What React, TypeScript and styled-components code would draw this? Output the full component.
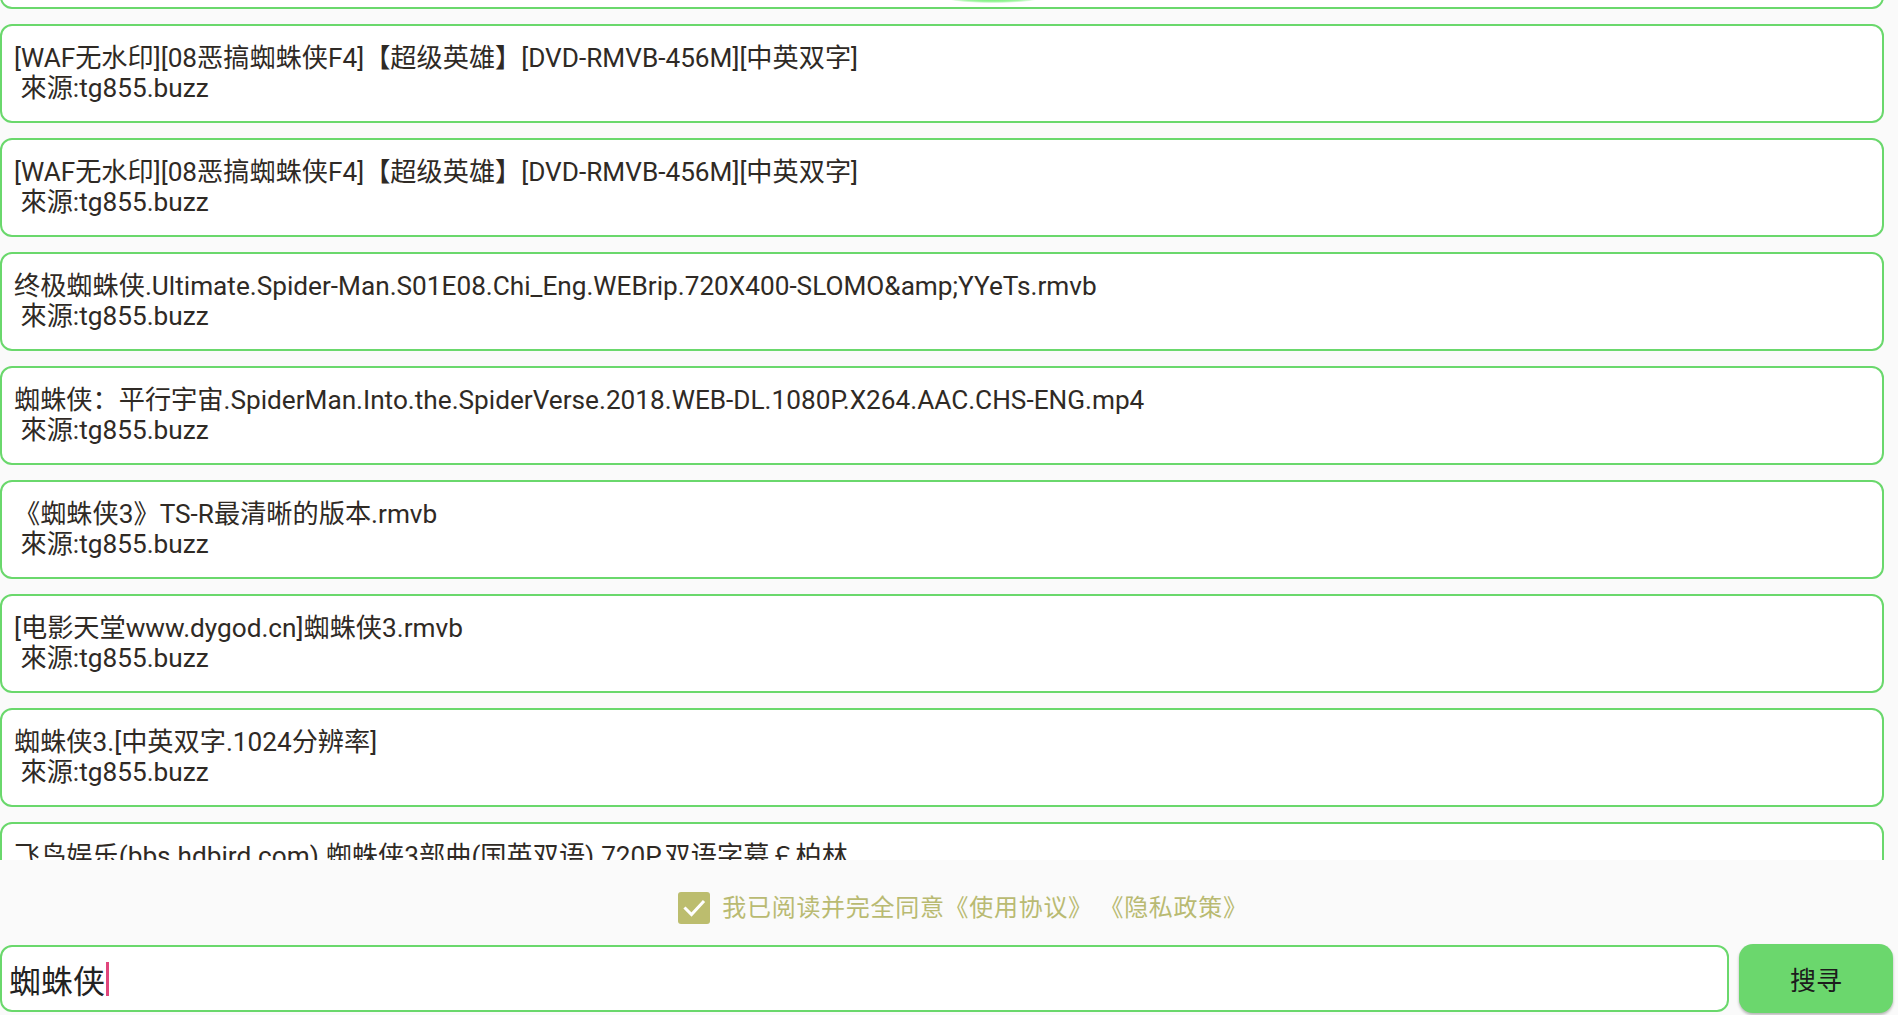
import React from "react";
import styled, { createGlobalStyle } from "styled-components";

const GlobalStyle = createGlobalStyle`
  html, body {
    margin: 0;
    padding: 0;
    background: #fafafa;
    overflow: hidden;
  }
  * { box-sizing: border-box; }
`;

const FONT = `Roboto, "Noto Sans CJK SC", "Noto Sans", sans-serif`;
const GREEN = "#6ad86c";

const Page = styled.div`
  width: 100vw;
  height: 100vh;
  display: flex;
  flex-direction: column;
  background: #fafafa;
  font-family: ${FONT};
`;

const ListViewport = styled.div`
  position: relative;
  flex: 1;
  overflow: hidden;
`;

const ListInner = styled.div`
  display: flex;
  flex-direction: column;
  gap: 15px;
  margin-top: -90px;
  padding-right: 14px;
`;

const Card = styled.div`
  height: 99px;
  background: #ffffff;
  border: 2px solid ${GREEN};
  border-radius: 12px;
  padding: 17px 12px 0 12px;
  color: #2f2a25;
  font-size: 26.2px;
  line-height: 30px;
  white-space: nowrap;
  overflow: hidden;
`;

const Title = styled.div``;
const Source = styled.div`
  white-space: pre;
`;

const Glow = styled.div`
  position: absolute;
  top: -6px;
  left: calc(50% + 44px);
  transform: translateX(-50%);
  width: 90px;
  height: 9px;
  border-radius: 50%;
  background: radial-gradient(ellipse at center, #5fee62 0%, rgba(95, 238, 98, 0.6) 50%, rgba(95, 238, 98, 0) 75%);
`;

const Footer = styled.div`
  display: flex;
  flex-direction: column;
  padding-bottom: 2px;
`;

const AgreementRow = styled.div`
  height: 84px;
  display: flex;
  justify-content: center;
  align-items: flex-start;
  padding-top: 32px;
  padding-left: 28px;
  gap: 12px;
`;

const CheckBox = styled.div`
  width: 32px;
  height: 32px;
  border-radius: 3px;
  background: #bcbd6e;
  display: flex;
  align-items: center;
  justify-content: center;
`;

const AgreementText = styled.span`
  color: #b9ba72;
  font-size: 24px;
  line-height: 32px;
  letter-spacing: 0.7px;
  white-space: pre;
`;

const SearchRow = styled.div`
  height: 69px;
  display: flex;
  align-items: center;
  gap: 10px;
  padding-right: 5px;
`;

const SearchInput = styled.div`
  flex: 1;
  height: 67px;
  background: #ffffff;
  border: 2px solid ${GREEN};
  border-radius: 12px;
  display: flex;
  align-items: center;
  padding-left: 7px;
  font-size: 32px;
  color: #222222;
`;

const Caret = styled.span`
  display: inline-block;
  width: 3px;
  height: 34px;
  margin-left: 1px;
  background: #e0457c;
`;

const SearchButton = styled.button`
  width: 154px;
  height: 69px;
  border: none;
  border-radius: 14px;
  background: #6bd76d;
  box-shadow: 0 2px 3px rgba(0, 0, 0, 0.28);
  font-family: ${FONT};
  font-size: 26px;
  color: #1c1c1c;
  padding: 0;
`;

const items = [
  "蜘蛛侠.Spider-Man.2002.BluRay.1080p.x264.中英双字",
  "[WAF无水印][08恶搞蜘蛛侠F4]【超级英雄】[DVD-RMVB-456M][中英双字]",
  "[WAF无水印][08恶搞蜘蛛侠F4]【超级英雄】[DVD-RMVB-456M][中英双字]",
  "终极蜘蛛侠.Ultimate.Spider-Man.S01E08.Chi_Eng.WEBrip.720X400-SLOMO&amp;YYeTs.rmvb",
  "蜘蛛侠：平行宇宙.SpiderMan.Into.the.SpiderVerse.2018.WEB-DL.1080P.X264.AAC.CHS-ENG.mp4",
  "《蜘蛛侠3》TS-R最清晰的版本.rmvb",
  "[电影天堂www.dygod.cn]蜘蛛侠3.rmvb",
  "蜘蛛侠3.[中英双字.1024分辨率]",
  "飞鸟娱乐(bbs.hdbird.com).蜘蛛侠3部曲(国英双语).720P.双语字幕￡柏林",
];

export default function App() {
  return (
    <>
      <GlobalStyle />
      <Page>
        <ListViewport>
          <ListInner>
            {items.map((t, i) => (
              <Card key={i}>
                <Title>{t}</Title>
                <Source>{" 來源:tg855.buzz"}</Source>
              </Card>
            ))}
          </ListInner>
          <Glow />
        </ListViewport>
        <Footer>
          <AgreementRow>
            <CheckBox>
              <svg width="24" height="24" viewBox="0 0 24 24" fill="none">
                <path d="M3.5 12.5 L9.5 18.5 L21 6" stroke="#ffffff" strokeWidth="3" strokeLinecap="square" />
              </svg>
            </CheckBox>
            <AgreementText>{"我已阅读并完全同意《使用协议》 《隐私政策》"}</AgreementText>
          </AgreementRow>
          <SearchRow>
            <SearchInput>
              蜘蛛侠
              <Caret />
            </SearchInput>
            <SearchButton>搜寻</SearchButton>
          </SearchRow>
        </Footer>
      </Page>
    </>
  );
}
